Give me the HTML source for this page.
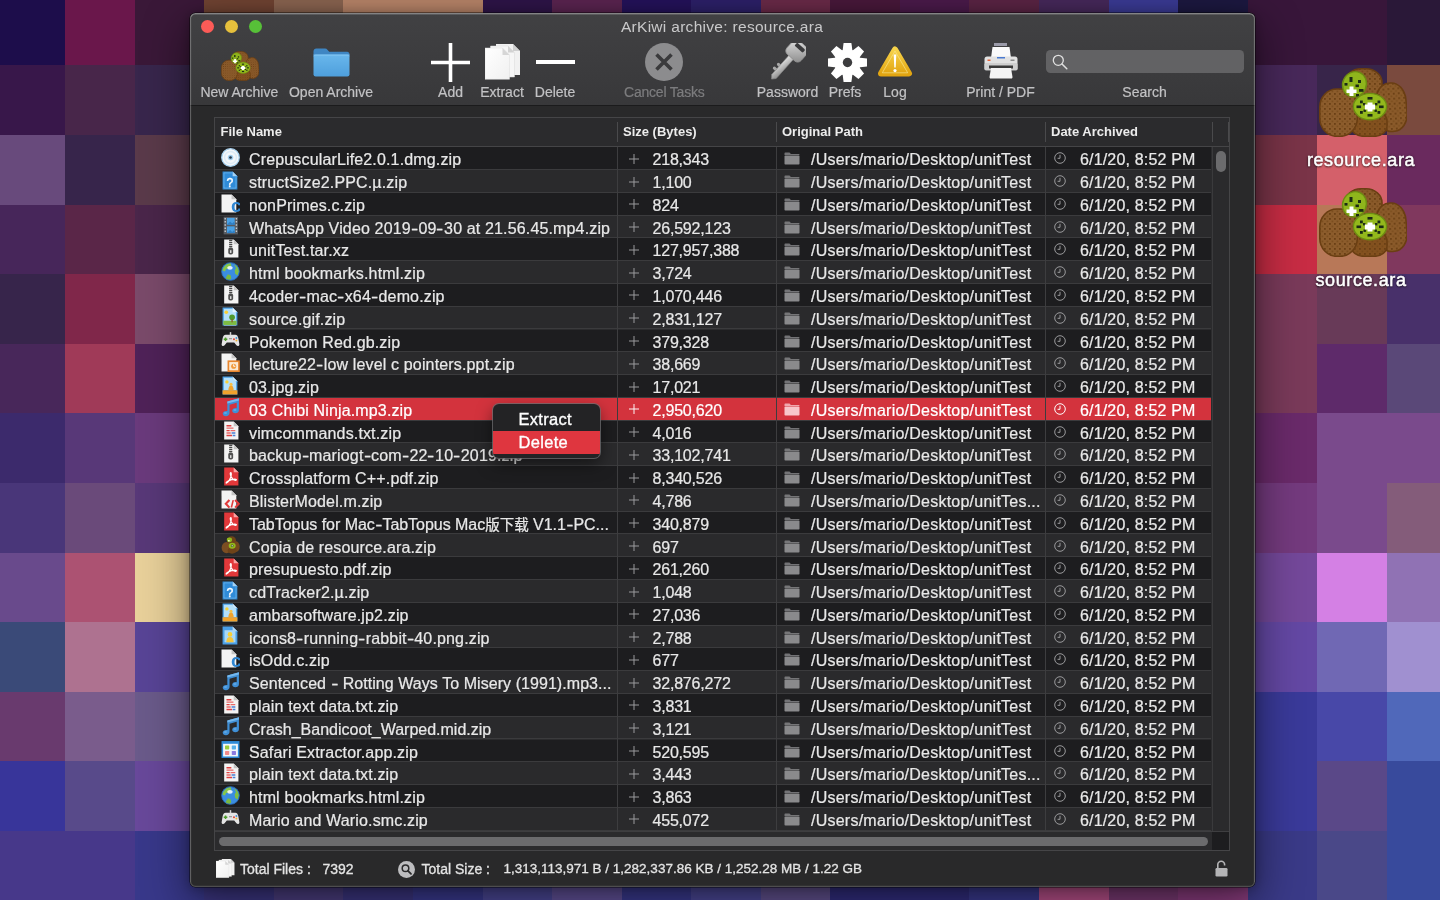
<!DOCTYPE html>
<html lang="en"><head><meta charset="utf-8"><title>ArKiwi archive: resource.ara</title>
<style>
*{box-sizing:border-box;margin:0;padding:0}
html,body{width:1440px;height:900px;overflow:hidden;background:#3a2a5a;font-family:"Liberation Sans","Noto Sans CJK SC",sans-serif;-webkit-font-smoothing:antialiased}
.bg{position:absolute;left:0;top:0}
.desk{will-change:transform;position:absolute;color:#fff;font-weight:400;-webkit-text-stroke:.5px #fff;font-size:18px;letter-spacing:.6px;text-shadow:0 1px 2px rgba(0,0,0,.7),0 0 3px rgba(0,0,0,.5);white-space:nowrap;transform:translateX(-50%)}
.win{will-change:transform;position:absolute;left:190px;top:13px;width:1065px;height:874px;border-radius:5.5px;background:#29292a;box-shadow:0 0 0 .5px rgba(0,0,0,.8),0 14px 44px 4px rgba(0,0,0,.45),0 1px 12px rgba(0,0,0,.3);overflow:hidden}
.win:after{content:"";position:absolute;inset:0;border-radius:5.5px;box-shadow:inset 0 1px 0 .5px rgba(255,255,255,.22),inset 0 0 0 1.2px rgba(255,255,255,.17);pointer-events:none}
.abs{position:absolute;left:-190px;top:-13px;width:1440px;height:900px}
.tb{position:absolute;left:190px;top:13px;width:1065px;height:93px;background:linear-gradient(#414143,#38383a);border-bottom:1.5px solid #1b1b1c}
.tl{position:absolute;top:19.5px;width:13px;height:13px;border-radius:50%}
.title{position:absolute;left:522px;width:400px;text-align:center;top:17.3px;font-size:15.5px;line-height:20px;color:#c9c9ca;letter-spacing:.3px;white-space:nowrap}
.lb{position:absolute;top:84px;font-size:14px;line-height:16px;color:#c2c2c4;white-space:nowrap;transform:translateX(-50%);letter-spacing:0;-webkit-text-stroke:.2px #c2c2c4}
.lb.dis{color:#7c7c7e;-webkit-text-stroke-color:#7c7c7e}
.ti{position:absolute;overflow:visible}
.search{position:absolute;left:1045.5px;top:49.5px;width:198px;height:23.5px;border-radius:4.5px;background:#626264}
.table{position:absolute;left:214px;top:117px;width:1016px;height:733.5px;border:1px solid #454547;background:#2b2b2d}
.hd{position:absolute;top:118px;height:28.5px;line-height:28.5px;font-size:13px;font-weight:700;color:#ececec;white-space:nowrap}
.hsep{position:absolute;top:122px;width:1px;height:20px;background:#4a4a4c}
.hline{position:absolute;left:215px;top:146.3px;width:1014px;height:1px;background:#454547}
.vsep{position:absolute;top:147.3px;width:1px;height:684px;background:#3d3d3f}
.row{position:absolute;left:215px;width:996px;height:22.8px;font-size:16px;line-height:22.8px;color:#e8e8e8;-webkit-text-stroke:.22px #e8e8e8;white-space:nowrap;border-bottom:1.2px solid #3b3b3d}
.row.odd{background:#1d1d1f}
.row.even{background:#2a2a2c}
.row.sel{background:#d3333d;color:#fff;-webkit-text-stroke-color:#fff}
.row span{position:absolute;top:2px}
.row svg{position:absolute;overflow:visible}
.fi{left:6px;top:.7px;width:19px;height:19px}
.nm{left:34px;letter-spacing:.15px}
.pl{left:414px;top:6.5px;width:10px;height:10px;color:#a0a0a2}
.sz{left:437.5px;letter-spacing:-.2px}
.fo{left:569px;top:5px;width:16px;height:13px;color:#8a8a8c}
.pa{left:596px;letter-spacing:.24px}
.ck{left:838.5px;top:5px;width:12px;height:12px;color:#9a9a9c}
.dt{left:865px;letter-spacing:.17px}
.hy{display:inline-block;font-style:normal;width:7.6px;text-align:center;transform:scaleX(1.35)}.cj{font-style:normal;font-size:14.5px}
.sel .pl,.sel .ck{color:#fff}.sel .fo{color:#f8c6ca}
.vsb{position:absolute;left:1212px;top:147.3px;width:17px;height:684px;background:#2a2a2c;border-left:1px solid #3a3a3c}
.vth{position:absolute;left:1216px;top:151px;width:10px;height:21px;border-radius:5px;background:#6b6b6d}
.hsb{position:absolute;left:215px;top:831.3px;width:1014px;height:18.5px;background:#2b2b2d;border-top:1px solid #3e3e40}
.hth{position:absolute;left:219px;top:837px;width:989px;height:9px;border-radius:4.5px;background:#6b6b6d}
.corner{position:absolute;left:1212px;top:832px;width:17px;height:17.5px;background:#1d1d1f}
.st{position:absolute;top:860px;font-size:14px;line-height:18px;color:#e4e4e4;white-space:nowrap;-webkit-text-stroke:.3px #e4e4e4}
.menu{position:absolute;left:493px;top:404px;width:107px;height:54px;border-radius:6px;background:#232325;box-shadow:0 0 0 1px rgba(110,110,112,.75),0 6px 16px rgba(0,0,0,.5);overflow:hidden;font-size:16.5px;color:#fff;-webkit-text-stroke:.35px #fff}
.mi{position:absolute;left:0;width:100%;height:22.5px;line-height:22.4px;padding-left:25.5px;letter-spacing:.3px}
.mi.hot{background:#df363f}
</style></head><body>
<svg class="bg" width="1440" height="900" viewBox="0 0 1440 900" shape-rendering="crispEdges"><rect x="0.0" y="0.0" width="65.6" height="65.8" fill="#1d0d4b"/><rect x="65.1" y="0.0" width="70.1" height="65.8" fill="#6a174b"/><rect x="134.7" y="0.0" width="70.1" height="65.8" fill="#3a1838"/><rect x="204.2" y="0.0" width="70.1" height="65.8" fill="#704332"/><rect x="273.8" y="0.0" width="70.1" height="65.8" fill="#8a6450"/><rect x="343.3" y="0.0" width="70.1" height="65.8" fill="#b88468"/><rect x="412.9" y="0.0" width="70.1" height="65.8" fill="#b88468"/><rect x="482.5" y="0.0" width="70.1" height="65.8" fill="#2e1448"/><rect x="552.0" y="0.0" width="70.1" height="65.8" fill="#5a2450"/><rect x="621.6" y="0.0" width="70.1" height="65.8" fill="#24125a"/><rect x="691.1" y="0.0" width="70.1" height="65.8" fill="#2c2068"/><rect x="760.7" y="0.0" width="70.1" height="65.8" fill="#6a2a48"/><rect x="830.3" y="0.0" width="70.1" height="65.8" fill="#48183a"/><rect x="899.8" y="0.0" width="70.1" height="65.8" fill="#4a1a4a"/><rect x="969.4" y="0.0" width="70.1" height="65.8" fill="#5a2444"/><rect x="1038.9" y="0.0" width="70.1" height="65.8" fill="#46285a"/><rect x="1108.5" y="0.0" width="70.1" height="65.8" fill="#3a3a94"/><rect x="1178.1" y="0.0" width="70.1" height="65.8" fill="#1c1840"/><rect x="1247.6" y="0.0" width="70.1" height="65.8" fill="#38163a"/><rect x="1317.2" y="0.0" width="70.1" height="65.8" fill="#38163a"/><rect x="1386.7" y="0.0" width="70.1" height="65.8" fill="#2a1838"/><rect x="0.0" y="65.3" width="65.6" height="70.1" fill="#38174a"/><rect x="65.1" y="65.3" width="70.1" height="70.1" fill="#48264a"/><rect x="134.7" y="65.3" width="70.1" height="70.1" fill="#38264c"/><rect x="1247.6" y="65.3" width="70.1" height="70.1" fill="#48285a"/><rect x="1317.2" y="65.3" width="70.1" height="70.1" fill="#38254a"/><rect x="1386.7" y="65.3" width="70.1" height="70.1" fill="#7a4a3e"/><rect x="0.0" y="134.9" width="65.6" height="70.1" fill="#684a7c"/><rect x="65.1" y="134.9" width="70.1" height="70.1" fill="#37254b"/><rect x="134.7" y="134.9" width="70.1" height="70.1" fill="#5a3a4a"/><rect x="1247.6" y="134.9" width="70.1" height="70.1" fill="#7a3448"/><rect x="1317.2" y="134.9" width="70.1" height="70.1" fill="#d4606a"/><rect x="1386.7" y="134.9" width="70.1" height="70.1" fill="#6a2a5e"/><rect x="0.0" y="204.5" width="65.6" height="70.1" fill="#47265a"/><rect x="65.1" y="204.5" width="70.1" height="70.1" fill="#5a2648"/><rect x="134.7" y="204.5" width="70.1" height="70.1" fill="#4a264a"/><rect x="1247.6" y="204.5" width="70.1" height="70.1" fill="#c82c44"/><rect x="1317.2" y="204.5" width="70.1" height="70.1" fill="#b87858"/><rect x="1386.7" y="204.5" width="70.1" height="70.1" fill="#80385e"/><rect x="0.0" y="274.1" width="65.6" height="70.1" fill="#37254b"/><rect x="65.1" y="274.1" width="70.1" height="70.1" fill="#80274a"/><rect x="134.7" y="274.1" width="70.1" height="70.1" fill="#7a4a6a"/><rect x="1247.6" y="274.1" width="70.1" height="70.1" fill="#7a3a5a"/><rect x="1317.2" y="274.1" width="70.1" height="70.1" fill="#683a58"/><rect x="1386.7" y="274.1" width="70.1" height="70.1" fill="#48306a"/><rect x="0.0" y="343.7" width="65.6" height="70.1" fill="#48275a"/><rect x="65.1" y="343.7" width="70.1" height="70.1" fill="#a03a58"/><rect x="134.7" y="343.7" width="70.1" height="70.1" fill="#4f2258"/><rect x="1247.6" y="343.7" width="70.1" height="70.1" fill="#7a3a5a"/><rect x="1317.2" y="343.7" width="70.1" height="70.1" fill="#5e2a6a"/><rect x="1386.7" y="343.7" width="70.1" height="70.1" fill="#5a4878"/><rect x="0.0" y="413.3" width="65.6" height="70.1" fill="#3c2a6c"/><rect x="65.1" y="413.3" width="70.1" height="70.1" fill="#583878"/><rect x="134.7" y="413.3" width="70.1" height="70.1" fill="#6a3a7c"/><rect x="1247.6" y="413.3" width="70.1" height="70.1" fill="#6a2a6a"/><rect x="1317.2" y="413.3" width="70.1" height="70.1" fill="#7a4a8c"/><rect x="1386.7" y="413.3" width="70.1" height="70.1" fill="#7a4a8c"/><rect x="0.0" y="482.9" width="65.6" height="70.1" fill="#493679"/><rect x="65.1" y="482.9" width="70.1" height="70.1" fill="#6a4a7a"/><rect x="134.7" y="482.9" width="70.1" height="70.1" fill="#583878"/><rect x="1247.6" y="482.9" width="70.1" height="70.1" fill="#743a7e"/><rect x="1317.2" y="482.9" width="70.1" height="70.1" fill="#7a4a8c"/><rect x="1386.7" y="482.9" width="70.1" height="70.1" fill="#845c7a"/><rect x="0.0" y="552.5" width="65.6" height="70.1" fill="#694a8c"/><rect x="65.1" y="552.5" width="70.1" height="70.1" fill="#ac5272"/><rect x="134.7" y="552.5" width="70.1" height="70.1" fill="#e8d09a"/><rect x="1247.6" y="552.5" width="70.1" height="70.1" fill="#74489a"/><rect x="1317.2" y="552.5" width="70.1" height="70.1" fill="#d480e4"/><rect x="1386.7" y="552.5" width="70.1" height="70.1" fill="#9072b4"/><rect x="0.0" y="622.1" width="65.6" height="70.1" fill="#3a4a78"/><rect x="65.1" y="622.1" width="70.1" height="70.1" fill="#ae7290"/><rect x="134.7" y="622.1" width="70.1" height="70.1" fill="#584496"/><rect x="1247.6" y="622.1" width="70.1" height="70.1" fill="#6448a4"/><rect x="1317.2" y="622.1" width="70.1" height="70.1" fill="#7068b4"/><rect x="1386.7" y="622.1" width="70.1" height="70.1" fill="#a090d0"/><rect x="0.0" y="691.7" width="65.6" height="70.1" fill="#693a6e"/><rect x="65.1" y="691.7" width="70.1" height="70.1" fill="#7a5c8c"/><rect x="134.7" y="691.7" width="70.1" height="70.1" fill="#6a5a8a"/><rect x="1247.6" y="691.7" width="70.1" height="70.1" fill="#3a3a9a"/><rect x="1317.2" y="691.7" width="70.1" height="70.1" fill="#4848a8"/><rect x="1386.7" y="691.7" width="70.1" height="70.1" fill="#5068ba"/><rect x="0.0" y="761.3" width="65.6" height="70.1" fill="#38359a"/><rect x="65.1" y="761.3" width="70.1" height="70.1" fill="#584a8a"/><rect x="134.7" y="761.3" width="70.1" height="70.1" fill="#68489a"/><rect x="1247.6" y="761.3" width="70.1" height="70.1" fill="#3a3a9a"/><rect x="1317.2" y="761.3" width="70.1" height="70.1" fill="#5a4888"/><rect x="1386.7" y="761.3" width="70.1" height="70.1" fill="#384a9c"/><rect x="0.0" y="830.9" width="65.6" height="70.1" fill="#47388a"/><rect x="65.1" y="830.9" width="70.1" height="70.1" fill="#47388a"/><rect x="134.7" y="830.9" width="70.1" height="70.1" fill="#38388a"/><rect x="204.2" y="830.9" width="70.1" height="70.1" fill="#3c3682"/><rect x="273.8" y="830.9" width="70.1" height="70.1" fill="#4c3e80"/><rect x="343.3" y="830.9" width="70.1" height="70.1" fill="#3c3682"/><rect x="412.9" y="830.9" width="70.1" height="70.1" fill="#3a3a90"/><rect x="482.5" y="830.9" width="70.1" height="70.1" fill="#4c4898"/><rect x="552.0" y="830.9" width="70.1" height="70.1" fill="#62529a"/><rect x="621.6" y="830.9" width="70.1" height="70.1" fill="#3a3a90"/><rect x="691.1" y="830.9" width="70.1" height="70.1" fill="#4c4898"/><rect x="760.7" y="830.9" width="70.1" height="70.1" fill="#625290"/><rect x="830.3" y="830.9" width="70.1" height="70.1" fill="#322e80"/><rect x="899.8" y="830.9" width="70.1" height="70.1" fill="#322e80"/><rect x="969.4" y="830.9" width="70.1" height="70.1" fill="#3a3a90"/><rect x="1038.9" y="830.9" width="70.1" height="70.1" fill="#b8508a"/><rect x="1108.5" y="830.9" width="70.1" height="70.1" fill="#7a3a74"/><rect x="1178.1" y="830.9" width="70.1" height="70.1" fill="#8a3c7e"/><rect x="1247.6" y="830.9" width="70.1" height="70.1" fill="#3a3a88"/><rect x="1317.2" y="830.9" width="70.1" height="70.1" fill="#4a4888"/><rect x="1386.7" y="830.9" width="70.1" height="70.1" fill="#384a9c"/></svg>
<svg width="0" height="0" style="position:absolute"><defs>
<pattern id="dots" width="5" height="5" patternUnits="userSpaceOnUse"><rect x="0" y="0" width="1.8" height="1.8" fill="#6a3f14"/><rect x="2.5" y="2.5" width="1.8" height="1.8" fill="#704416" opacity=".6"/></pattern>
<symbol id="i-bigkiwi" viewBox="0 0 88 69">
<rect x="26" y=".8" width="37" height="36" rx="16" ry="14" fill="#8a5a2a" stroke="#6a3e12" stroke-width="1.600"/>
<rect x="26" y=".8" width="37" height="36" rx="16" ry="14" fill="url(#dots)"/>
<rect x="57.500" y="15" width="30" height="48.500" rx="14" ry="18" transform="rotate(-5 72.500 39)" fill="#8a5a2a" stroke="#6a3e12" stroke-width="1.600"/>
<rect x="57.500" y="15" width="30" height="48.500" rx="14" ry="18" transform="rotate(-5 72.500 39)" fill="url(#dots)"/>
<rect x="32" y="43" width="36" height="25.300" rx="13" ry="10" fill="#83511f" stroke="#6a3e12" stroke-width="1.600"/>
<rect x="32" y="43" width="36" height="25.300" rx="13" ry="10" fill="url(#dots)"/>
<rect x=".8" y="21" width="37.500" height="47.300" rx="17" ry="18" fill="#8c5c2c" stroke="#6a3e12" stroke-width="1.600"/>
<rect x=".8" y="21" width="37.500" height="47.300" rx="17" ry="18" fill="url(#dots)"/>
<ellipse cx="35.500" cy="16.300" rx="11.800" ry="12.800" transform="rotate(25 35.500 16.300)" fill="#8fb51c" stroke="#6d8c12" stroke-width="1.400"/>
<g fill="#1c2a14"><rect x="30.500" y="9" width="3" height="5"/><rect x="39" y="12" width="3" height="3"/><rect x="25.500" y="15" width="3" height="2.600"/><rect x="36.500" y="16.500" width="3.400" height="2.600"/><rect x="40" y="21" width="4.500" height="2.800"/><rect x="37" y="26" width="3" height="2.500"/></g>
<path d="M30.500 18.500h4v3h3v3.600h-3v3h-4v-3h-3v-3.600h3z" fill="#fff"/>
<ellipse cx="51" cy="38.600" rx="16.600" ry="13.200" fill="#93b81c" stroke="#6d8c12" stroke-width="1.400"/>
<g fill="#1c2a14"><rect x="48.500" y="29" width="5" height="2.600"/><rect x="41" y="32.500" width="2.800" height="2.800"/><rect x="58.500" y="32.500" width="2.800" height="2.800"/><rect x="37.500" y="37.500" width="4.600" height="2.600"/><rect x="60" y="37.500" width="4.600" height="2.600"/><rect x="41" y="43" width="2.800" height="2.800"/><rect x="58.500" y="43" width="2.800" height="2.800"/><rect x="48.500" y="46" width="5" height="2.600"/><rect x="44" y="35" width="2.400" height="2.400"/><rect x="56" y="35" width="2.400" height="2.400"/><rect x="44.500" y="41.500" width="2.400" height="2.400"/><rect x="55.500" y="41.500" width="2.400" height="2.400"/></g>
<path d="M48.500 34.500h5v2h2.600v5h-2.600v2h-5v-2h-2.600v-5h2.600z" fill="#fff"/>
</symbol>
<symbol id="i-kiwi" viewBox="0 0 18 18"><ellipse cx="10" cy="5" rx="4.200" ry="3.800" fill="#6e4318"/><ellipse cx="14.300" cy="11" rx="3.400" ry="5" fill="#74481c"/><ellipse cx="5.200" cy="12" rx="4.600" ry="5.300" fill="#7c4e22"/><ellipse cx="10.500" cy="14.800" rx="4.200" ry="2.900" fill="#6e4318"/><ellipse cx="8" cy="4.600" rx="2.500" ry="2.300" fill="#8fb51c"/><ellipse cx="10.600" cy="10.200" rx="3.300" ry="2.800" fill="#93b81c"/><circle cx="10.600" cy="10.200" r="1.200" fill="#2a3a10"/><rect x="10" y="9.700" width="1.200" height="1.100" fill="#fff"/><rect x="6.800" y="4.800" width="1.300" height="1.300" fill="#fff"/></symbol>
<symbol id="i-plus" viewBox="0 0 11 11"><path d="M5.5 0v11M0 5.5h11" stroke="currentColor" stroke-width="1.050" fill="none"/></symbol>
<symbol id="i-folder" viewBox="0 0 16 13"><path d="M.5 1.2C.5.8.8.5 1.2.5h4.3l1.4 1.6h7.9c.4 0 .7.3.7.7V3H.5z" fill="currentColor" opacity=".8"/><rect x=".5" y="3.6" width="15" height="9" rx=".8" fill="currentColor"/></symbol>
<symbol id="i-clock" viewBox="0 0 12 12"><circle cx="6" cy="6" r="5.3" fill="none" stroke="currentColor" stroke-width="1"/><path d="M6 2.8V6.3H3.6" fill="none" stroke="currentColor" stroke-width="1"/></symbol>

<symbol id="i-disc" viewBox="0 0 18 18"><circle cx="9" cy="9" r="8.300" fill="#f3f7fb" stroke="#a9d3f1" stroke-width="1.200"/><circle cx="9" cy="9" r="5.600" fill="none" stroke="#dcebf7" stroke-width="1.400"/><circle cx="9" cy="9" r="2.600" fill="#a4cfee"/><circle cx="9" cy="9" r="1.300" fill="#27384a"/></symbol>
<symbol id="i-unk" viewBox="0 0 18 18"><path d="M1.5 .5H11L15.5 5v12.5h-14z" fill="#2f8bd8"/><path d="M11 .5V5h4.5z" fill="#a6d2f3"/><path d="M2.800 1.800h7.700M2.800 1.800v14.400h11.400V6" fill="none" stroke="#7fc0f0" stroke-width=".7" opacity=".8"/><text x="8.500" y="14.800" font-size="11.500" font-weight="400" fill="#fff" stroke="#fff" stroke-width=".35" text-anchor="middle" font-family="Liberation Sans,sans-serif">?</text></symbol>
<symbol id="i-cfile" viewBox="0 0 18 18"><path d="M.5 .5H10L14.5 5v12.5H.5z" fill="#f3f3f3"/><path d="M10 .5V5h4.5z" fill="#c4c4c4"/><text x="14.500" y="17.500" font-size="18" font-weight="700" fill="#2f86d2" text-anchor="middle" font-family="Liberation Sans,sans-serif">c</text></symbol>
<symbol id="i-video" viewBox="0 0 18 18"><rect x="2.5" y=".8" width="13.5" height="16.6" fill="#585c62"/><rect x="5.6" y="1.8" width="7.4" height="6.4" fill="#4aa1e4"/><rect x="5.6" y="9.8" width="7.4" height="6.4" fill="#4aa1e4"/><path d="M5.6 8.2l3-3 2 2 1.4-1.4 1 1v1.4zM5.6 16.2l3-3 2 2 1.4-1.4 1 1v1.4z" fill="#2f7fc4"/><path d="M4 1.8v15M14.6 1.8v15" stroke="#c8ccd0" stroke-width="1.3" stroke-dasharray="1.4 1.6"/></symbol>
<symbol id="i-zip" viewBox="0 0 18 18"><g transform="translate(1 0)"><path d="M2 .5h9L15.5 5v12.5H2z" fill="#f3f3f3"/><path d="M11 .5V5h4.5z" fill="#c4c4c4"/><path d="M8.200 .8v8" stroke="#484848" stroke-width="3" stroke-dasharray="1.100 .8"/><rect x="5.900" y="8" width="4.600" height="6.800" rx="1.900" fill="#505050"/><rect x="7.5" y="10.6" width="1.4" height="2.6" fill="#ddd"/></g></symbol>
<symbol id="i-globe" viewBox="0 0 18 18"><circle cx="9" cy="9" r="8.4" fill="#3b8de0"/><path d="M3 4.5c2-2.6 4.4-3.6 6-3.6l.8 2.6-2.6 2.8-2.4.4-1 2.4L1.2 8c.2-1.4.9-2.6 1.800-3.500z" fill="#86c64a"/><path d="M12.5 2.200c2.500 1.200 4.300 3.400 4.700 6.200l-1.400 4.400-2.400-1.600-.4-3.400 1.200-2.200z" fill="#7fbe44"/><path d="M6.500 11.500l2.600 1 .6 2.800-1.600 2c-1.600-.1-3-.8-4-1.700z" fill="#79b840"/><ellipse cx="8.500" cy="5.500" rx="2.600" ry="1.800" fill="#fff" opacity=".85"/><circle cx="9" cy="9" r="8.400" fill="none" stroke="#2a6fc0" stroke-width=".8"/></symbol>
<symbol id="i-gif" viewBox="0 0 18 18"><path d="M1.500 .500H11L15.500 5v12.500h-14z" fill="#4a9fe6"/><path d="M2.700 1.700H10.500L14.300 5.500v12h-11.600z" fill="#b4e0fa"/><path d="M11 .500V5h4.500z" fill="#e3f3fd"/><rect x="2.200" y="13" width="12.600" height="4" fill="#7dbb42"/><circle cx="5" cy="5" r="1.700" fill="#f7d038"/><circle cx="10.500" cy="9.800" r="2.700" fill="#4f9a2e"/><rect x="9.900" y="11.500" width="1.200" height="3" fill="#8a5a2a"/></symbol>
<symbol id="i-jpg" viewBox="0 0 18 18"><path d="M1.500 .500H11L15.500 5v12.500h-14z" fill="#4a9fe6"/><path d="M11 .500V5h4.500z" fill="#d6ecfb"/><path d="M2.700 1.700H10.500L14.300 5.500v8h-11.600z" fill="#b4e0fa"/><rect x="1.500" y="13.500" width="14" height="4" fill="#f1a32c"/><circle cx="5.600" cy="5.600" r="1.600" fill="#f7d038"/><path d="M7 13.500c0-3 1-4.500 2.500-4.500s2.500 1.500 2.500 4.500z" fill="#f1a32c"/><circle cx="9.500" cy="8" r="1.500" fill="#f6c04a"/></symbol>
<symbol id="i-png" viewBox="0 0 18 18"><path d="M1.500 .500H11L15.500 5v12.500h-14z" fill="#4a9fe6"/><path d="M11 .500V5h4.500z" fill="#b9dcf6"/><rect x="3.300" y="4" width="10.400" height="11.500" fill="#a9d8f7"/><circle cx="8.500" cy="8" r="2.200" fill="#f7d038"/><path d="M5 15.500c0-3.400 1.400-5 3.500-5s3.500 1.600 3.500 5z" fill="#f4c53c"/></symbol>
<symbol id="i-pad" viewBox="0 0 18 18"><path d="M4.500 4.500h9c1.700 0 2.600 1.300 3 3.500l.9 5.500c.2 1.700-1.700 2.300-2.800 1l-2.100-2.600h-7L3.400 14.500c-1.100 1.300-3 .7-2.800-1L1.500 8c.4-2.200 1.300-3.500 3-3.500z" fill="#e4e4e4"/><rect x="8.300" y="2" width="1.400" height="3" fill="#d0d0d0"/><path d="M4.300 7v3.400M2.600 8.700H6" stroke="#4c9a2a" stroke-width="1.400"/><circle cx="12.300" cy="8.700" r="1" fill="#e2483a"/><circle cx="14.600" cy="7.600" r=".9" fill="#3f8fd6"/><circle cx="14.600" cy="9.900" r=".9" fill="#f0b030"/><rect x="7.600" y="7.600" width="2.800" height="1.200" fill="#9a9a9a"/></symbol>
<symbol id="i-ppt" viewBox="0 0 18 18"><path d="M.500 .500H10L14.500 5v12.500H.500z" fill="#f3f3f3"/><path d="M10 .500V5h4.500z" fill="#c4c4c4"/><rect x="7" y="7.800" width="10" height="9.400" fill="#fbe9d2" stroke="#e8862e" stroke-width="1.600"/><circle cx="12" cy="12.500" r="2.400" fill="#f19a3c"/><path d="M12 10.800v1.800h1.600" stroke="#fff" stroke-width=".9" fill="none"/></symbol>
<symbol id="i-music" viewBox="0 0 18 18"><path d="M6 3.200L17 .300v11.200c0 1.700-1.600 2.900-3.400 2.900s-3-1-3-2.400 1.400-2.600 3.200-2.600c.4 0 .8.100 1.100.200V4.600L8.100 6.400v7.900c0 1.700-1.600 3-3.400 3s-3.100-1-3.100-2.500 1.500-2.600 3.300-2.600c.4 0 .8.100 1.100.200z" fill="#3f8fd6"/><path d="M6 3.200L17 .300v2L6 5.200z" fill="#74b8ee"/><ellipse cx="4.200" cy="14.200" rx="1.500" ry="1" fill="#74b8ee" opacity=".6"/><ellipse cx="13.200" cy="11.400" rx="1.500" ry="1" fill="#74b8ee" opacity=".6"/></symbol>
<symbol id="i-txt" viewBox="0 0 18 18"><g transform="translate(1 0)"><path d="M2 .500h9L15.500 5v12.500H2z" fill="#f3f3f3"/><path d="M11 .500V5h4.500z" fill="#c4c4c4"/><g stroke-width="1.300"><path d="M4.200 4.500h4.600M4.200 9.100h3M4.200 13.700h5.200" stroke="#df3f3f"/><path d="M4.200 6.800h6.600M8 9.100h4.500M4.200 11.400h4" stroke="#e86a6a"/><path d="M9 11.400h3.600M10 13.700h2.600" stroke="#4a7fd4"/></g></g></symbol>
<symbol id="i-pdf" viewBox="0 0 18 18"><g transform="translate(1 0)"><path d="M2 .500h9L15.500 5v12.500H2z" fill="#e2383a"/><path d="M11 .500V5h4.500z" fill="#f6a6a6"/><path d="M4.200 15.200c1.800-1 3.400-3.600 4.200-6.200.5-1.700.6-3.600-.1-3.700-.8-.1-.7 1.900.2 3.700.9 1.900 2.600 3.500 4.200 3.600 1.100.1 1.400-.7.300-1-1.800-.5-6.200.8-8.300 2.400-.9.700-1.100 1.500-.5 1.200z" fill="none" stroke="#fff" stroke-width="1.100"/></g></symbol>
<symbol id="i-code" viewBox="0 0 18 18"><path d="M.500 .500H10L14.500 5v12.500H.500z" fill="#f3f3f3"/><path d="M10 .500V5h4.500z" fill="#c4c4c4"/><path d="M8 9.500l-3.400 3.600L8 16.700M13.400 9.500l3.400 3.600-3.400 3.600" fill="none" stroke="#e03a3a" stroke-width="2"/><path d="M11.600 9.600l-1.800 7" stroke="#e03a3a" stroke-width="1.500"/></symbol>
<symbol id="i-app" viewBox="0 0 18 18"><rect x=".500" y="1" width="17" height="16" fill="#2f8bd8"/><rect x="2" y="3.600" width="14" height="12" fill="#f2f6fa"/><rect x="3.800" y="5.200" width="4" height="3.800" rx=".6" fill="#9ccc3c"/><rect x="10.200" y="5.200" width="4" height="3.800" rx=".6" fill="#58b0ea"/><rect x="3.800" y="10.400" width="4" height="3.800" rx=".6" fill="#f08a8a"/><rect x="10.200" y="10.400" width="4" height="3.800" rx=".6" fill="#8a7be0"/></symbol>

<linearGradient id="gfold" x1="0" y1="0" x2="0" y2="1"><stop offset="0" stop-color="#69b7ec"/><stop offset="1" stop-color="#4e9fdc"/></linearGradient>
<symbol id="t-folder" viewBox="0 0 37 29"><path d="M.500 3.500C.500 1.800 1.700 .600 3.300 .600h8.800c1 0 1.700.4 2.300 1.100l1.800 2H34c1.500 0 2.500 1 2.500 2.500V9H.500z" fill="#3f86c3"/><rect x=".500" y="6.500" width="36" height="22" rx="2.200" fill="url(#gfold)"/><rect x=".500" y="6.500" width="36" height="1.200" fill="#8ccaf4" opacity=".7"/></symbol>
<linearGradient id="gdoc" x1="0" y1="0" x2="1" y2="1"><stop offset="0" stop-color="#ffffff"/><stop offset="1" stop-color="#f0f0f0"/></linearGradient>
<symbol id="t-docs" viewBox="0 0 36 36"><path d="M11 0h17l7 7v24H11z" fill="#f1f1f1"/><path d="M28 0v7h7z" fill="#cfcfcf"/><path d="M5.500 2h17.500l6.500 6.500v24.500H5.500z" fill="#f6f6f6" stroke="#d8d8d8" stroke-width=".5"/><path d="M23 2v6.500h6.500z" fill="#d2d2d2"/><path d="M0 4h17.500l7 7v24.300H0z" fill="url(#gdoc)" stroke="#dcdcdc" stroke-width=".5"/><path d="M17.500 4v7h7z" fill="#d6d6d6"/></symbol>
<linearGradient id="gkey" x1="0" y1="0" x2="1" y2="1"><stop offset="0" stop-color="#e4e4e4"/><stop offset=".5" stop-color="#b6b6b6"/><stop offset="1" stop-color="#8a8a8a"/></linearGradient>
<symbol id="t-key" viewBox="0 0 38 38"><g transform="rotate(42 19 19)"><rect x="9.500" y="-5" width="19" height="18" rx="4.500" fill="url(#gkey)" stroke="#9a9a9a" stroke-width=".8"/><rect x="13.500" y="-2.200" width="11" height="4" rx="1.200" fill="#3a3a3c"/><path d="M16 13h6v25.500l-3 3.500-3-3.500z" fill="url(#gkey)" stroke="#8a8a8a" stroke-width=".6"/><path d="M16 25h-2.500l-1 1.500 1 1.500h2.500zM16 30.500h-3l-1 1.500 1 1.500h3z" fill="#a8a8a8"/></g></symbol>
<symbol id="t-gear" viewBox="0 0 39 39"><g fill="#fff"><circle cx="19.500" cy="19.500" r="13.200"/><g id="tooth"><path d="M15.600 0h7.800l1.200 9h-10.200z"/></g><use href="#tooth" transform="rotate(45 19.500 19.500)"/><use href="#tooth" transform="rotate(90 19.500 19.500)"/><use href="#tooth" transform="rotate(135 19.500 19.500)"/><use href="#tooth" transform="rotate(180 19.500 19.500)"/><use href="#tooth" transform="rotate(225 19.500 19.500)"/><use href="#tooth" transform="rotate(270 19.500 19.500)"/><use href="#tooth" transform="rotate(315 19.500 19.500)"/></g><circle cx="19.500" cy="19.500" r="4.700" fill="#3c3c3e"/></symbol>
<linearGradient id="gwarn" x1="0" y1="0" x2="0" y2="1"><stop offset="0" stop-color="#f7d34a"/><stop offset="1" stop-color="#e2a511"/></linearGradient>
<symbol id="t-warn" viewBox="0 0 36 33"><path d="M18 4.500L32 28.500H4z" fill="url(#gwarn)" stroke="url(#gwarn)" stroke-width="6" stroke-linejoin="round"/><path d="M18 6L30.700 27.800H5.300z" fill="none" stroke="#f8e48e" stroke-width=".9" stroke-linejoin="round" opacity=".75"/><path d="M16.700 9.500h2.600l-.6 13h-1.400z" fill="#fff"/><circle cx="18" cy="25.600" r="1.600" fill="#fff"/></symbol>
<symbol id="t-print" viewBox="0 0 34 36"><rect x="10" y="0" width="13" height="3" fill="#9a9aa8"/><path d="M8.500 4h17l1.500 11h-20z" fill="#fafafa"/><path d="M3 13.500h28c1.500 0 2.500 1 2.500 2.500v9.500c0 1-.8 1.800-1.800 1.800H2.300c-1 0-1.800-.8-1.800-1.800V16c0-1.500 1-2.500 2.500-2.500z" fill="#e2e2e2"/><rect x=".500" y="20" width="33" height="7.300" rx="1.500" fill="#cfcfcf"/><rect x="5" y="22.500" width="24" height="3" fill="#3a3a3a"/><path d="M7 25h20l1.500 9c.1.800-.4 1.500-1.200 1.500H6.700c-.8 0-1.300-.7-1.200-1.500z" fill="#f4f4f4"/><rect x="3.500" y="16.500" width="3" height="1.500" fill="#e8643a"/><rect x="26.500" y="16.500" width="4" height="1.500" fill="#8a8a8a"/><rect x="13" y="14" width="8" height="1.500" fill="#4a7ad0"/></symbol>

</defs></svg>
<svg class="ti" style="left:1319px;top:68px;width:88px;height:69px" viewBox="0 0 88 69"><use href="#i-bigkiwi"/></svg>
<div class="desk" style="left:1361px;top:150px">resource.ara</div>
<svg class="ti" style="left:1319px;top:188px;width:88px;height:69px" viewBox="0 0 88 69"><use href="#i-bigkiwi"/></svg>
<div class="desk" style="left:1361px;top:270px">source.ara</div>
<div class="win"><div class="abs">
<div class="tb"></div>
<div class="tl" style="left:200.5px;background:#fc5b57"></div>
<div class="tl" style="left:224.5px;background:#e5bf3c"></div>
<div class="tl" style="left:248.5px;background:#57c038"></div>
<div class="title">ArKiwi archive: resource.ara</div>

<svg class="ti" style="left:221px;top:51px;width:38px;height:30px" viewBox="0 0 88 69"><use href="#i-bigkiwi"/></svg>
<div class="lb" style="left:239.3px">New Archive</div>
<svg class="ti" style="left:313px;top:47.5px;width:37px;height:29px" viewBox="0 0 37 29"><use href="#t-folder"/></svg>
<div class="lb" style="left:331px">Open Archive</div>
<svg class="ti" style="left:431px;top:42.5px;width:39px;height:39px" viewBox="0 0 39 39"><path d="M19.5 0v39M0 19.5h39" stroke="#fff" stroke-width="3.6" fill="none"/></svg>
<div class="lb" style="left:450.5px">Add</div>
<svg class="ti" style="left:485px;top:44px;width:36px;height:36px" viewBox="0 0 36 36"><use href="#t-docs"/></svg>
<div class="lb" style="left:502px">Extract</div>
<svg class="ti" style="left:535.5px;top:42.5px;width:39px;height:39px" viewBox="0 0 39 39"><path d="M0 19h39" stroke="#fff" stroke-width="4" fill="none"/></svg>
<div class="lb" style="left:555px">Delete</div>
<svg class="ti" style="left:645px;top:43px;width:38px;height:38px" viewBox="0 0 38 38"><circle cx="19" cy="19" r="19" fill="#8c8c8e"/><path d="M11.5 11.5l15 15M26.5 11.5l-15 15" stroke="#3a3a3c" stroke-width="3.6" fill="none"/></svg>
<div class="lb dis" style="left:664.3px;letter-spacing:-.2px">Cancel Tasks</div>
<svg class="ti" style="left:768px;top:43px;width:38px;height:38px" viewBox="0 0 38 38"><use href="#t-key"/></svg>
<div class="lb" style="left:787.5px">Password</div>
<svg class="ti" style="left:828px;top:42.5px;width:39px;height:39px" viewBox="0 0 39 39"><use href="#t-gear"/></svg>
<div class="lb" style="left:845px">Prefs</div>
<svg class="ti" style="left:877px;top:45px;width:36px;height:33px" viewBox="0 0 36 33"><use href="#t-warn"/></svg>
<div class="lb" style="left:895px">Log</div>
<svg class="ti" style="left:984px;top:43px;width:34px;height:36px" viewBox="0 0 34 36"><use href="#t-print"/></svg>
<div class="lb" style="left:1000.5px">Print / PDF</div>
<div class="search"></div>
<svg class="ti" style="left:1052px;top:54px;width:16px;height:16px" viewBox="0 0 16 16"><circle cx="6.3" cy="6.3" r="5" fill="none" stroke="#e0e0e0" stroke-width="1.3"/><path d="M10 10l4.8 4.8" stroke="#e0e0e0" stroke-width="1.5" stroke-linecap="round"/></svg>
<div class="lb" style="left:1144.5px">Search</div>

<div class="table"></div>
<div class="hd" style="left:220.5px">File Name</div>
<div class="hd" style="left:623px">Size (Bytes)</div>
<div class="hd" style="left:782px">Original Path</div>
<div class="hd" style="left:1051px">Date Archived</div>
<div class="hsep" style="left:617px"></div><div class="hsep" style="left:776px"></div><div class="hsep" style="left:1045px"></div><div class="hsep" style="left:1211.5px"></div><div class="hsep" style="left:1228px"></div>
<div class="hline"></div>
<div class="row odd" style="top:147.3px"><svg class="fi"><use href="#i-disc"/></svg><span class="nm">CrepuscularLife2.0.1.dmg.zip</span><svg class="pl"><use href="#i-plus"/></svg><span class="sz">218,343</span><svg class="fo"><use href="#i-folder"/></svg><span class="pa">/Users/mario/Desktop/unitTest</span><svg class="ck"><use href="#i-clock"/></svg><span class="dt">6/1/20, 8:52 PM</span></div>
<div class="row even" style="top:170.1px"><svg class="fi"><use href="#i-unk"/></svg><span class="nm">structSize2.PPC.µ.zip</span><svg class="pl"><use href="#i-plus"/></svg><span class="sz">1,100</span><svg class="fo"><use href="#i-folder"/></svg><span class="pa">/Users/mario/Desktop/unitTest</span><svg class="ck"><use href="#i-clock"/></svg><span class="dt">6/1/20, 8:52 PM</span></div>
<div class="row odd" style="top:192.9px"><svg class="fi"><use href="#i-cfile"/></svg><span class="nm">nonPrimes.c.zip</span><svg class="pl"><use href="#i-plus"/></svg><span class="sz">824</span><svg class="fo"><use href="#i-folder"/></svg><span class="pa">/Users/mario/Desktop/unitTest</span><svg class="ck"><use href="#i-clock"/></svg><span class="dt">6/1/20, 8:52 PM</span></div>
<div class="row even" style="top:215.6px"><svg class="fi"><use href="#i-video"/></svg><span class="nm">WhatsApp Video 2019<i class="hy">-</i>09<i class="hy">-</i>30 at 21.56.45.mp4.zip</span><svg class="pl"><use href="#i-plus"/></svg><span class="sz">26,592,123</span><svg class="fo"><use href="#i-folder"/></svg><span class="pa">/Users/mario/Desktop/unitTest</span><svg class="ck"><use href="#i-clock"/></svg><span class="dt">6/1/20, 8:52 PM</span></div>
<div class="row odd" style="top:238.4px"><svg class="fi"><use href="#i-zip"/></svg><span class="nm">unitTest.tar.xz</span><svg class="pl"><use href="#i-plus"/></svg><span class="sz">127,957,388</span><svg class="fo"><use href="#i-folder"/></svg><span class="pa">/Users/mario/Desktop/unitTest</span><svg class="ck"><use href="#i-clock"/></svg><span class="dt">6/1/20, 8:52 PM</span></div>
<div class="row even" style="top:261.2px"><svg class="fi"><use href="#i-globe"/></svg><span class="nm">html bookmarks.html.zip</span><svg class="pl"><use href="#i-plus"/></svg><span class="sz">3,724</span><svg class="fo"><use href="#i-folder"/></svg><span class="pa">/Users/mario/Desktop/unitTest</span><svg class="ck"><use href="#i-clock"/></svg><span class="dt">6/1/20, 8:52 PM</span></div>
<div class="row odd" style="top:283.9px"><svg class="fi"><use href="#i-zip"/></svg><span class="nm">4coder<i class="hy">-</i>mac<i class="hy">-</i>x64<i class="hy">-</i>demo.zip</span><svg class="pl"><use href="#i-plus"/></svg><span class="sz">1,070,446</span><svg class="fo"><use href="#i-folder"/></svg><span class="pa">/Users/mario/Desktop/unitTest</span><svg class="ck"><use href="#i-clock"/></svg><span class="dt">6/1/20, 8:52 PM</span></div>
<div class="row even" style="top:306.7px"><svg class="fi"><use href="#i-gif"/></svg><span class="nm">source.gif.zip</span><svg class="pl"><use href="#i-plus"/></svg><span class="sz">2,831,127</span><svg class="fo"><use href="#i-folder"/></svg><span class="pa">/Users/mario/Desktop/unitTest</span><svg class="ck"><use href="#i-clock"/></svg><span class="dt">6/1/20, 8:52 PM</span></div>
<div class="row odd" style="top:329.5px"><svg class="fi"><use href="#i-pad"/></svg><span class="nm">Pokemon Red.gb.zip</span><svg class="pl"><use href="#i-plus"/></svg><span class="sz">379,328</span><svg class="fo"><use href="#i-folder"/></svg><span class="pa">/Users/mario/Desktop/unitTest</span><svg class="ck"><use href="#i-clock"/></svg><span class="dt">6/1/20, 8:52 PM</span></div>
<div class="row even" style="top:352.3px"><svg class="fi"><use href="#i-ppt"/></svg><span class="nm">lecture22<i class="hy">-</i>low level c pointers.ppt.zip</span><svg class="pl"><use href="#i-plus"/></svg><span class="sz">38,669</span><svg class="fo"><use href="#i-folder"/></svg><span class="pa">/Users/mario/Desktop/unitTest</span><svg class="ck"><use href="#i-clock"/></svg><span class="dt">6/1/20, 8:52 PM</span></div>
<div class="row odd" style="top:375.1px"><svg class="fi"><use href="#i-jpg"/></svg><span class="nm">03.jpg.zip</span><svg class="pl"><use href="#i-plus"/></svg><span class="sz">17,021</span><svg class="fo"><use href="#i-folder"/></svg><span class="pa">/Users/mario/Desktop/unitTest</span><svg class="ck"><use href="#i-clock"/></svg><span class="dt">6/1/20, 8:52 PM</span></div>
<div class="row even sel" style="top:397.8px"><svg class="fi"><use href="#i-music"/></svg><span class="nm">03 Chibi Ninja.mp3.zip</span><svg class="pl"><use href="#i-plus"/></svg><span class="sz">2,950,620</span><svg class="fo"><use href="#i-folder"/></svg><span class="pa">/Users/mario/Desktop/unitTest</span><svg class="ck"><use href="#i-clock"/></svg><span class="dt">6/1/20, 8:52 PM</span></div>
<div class="row odd" style="top:420.6px"><svg class="fi"><use href="#i-txt"/></svg><span class="nm">vimcommands.txt.zip</span><svg class="pl"><use href="#i-plus"/></svg><span class="sz">4,016</span><svg class="fo"><use href="#i-folder"/></svg><span class="pa">/Users/mario/Desktop/unitTest</span><svg class="ck"><use href="#i-clock"/></svg><span class="dt">6/1/20, 8:52 PM</span></div>
<div class="row even" style="top:443.4px"><svg class="fi"><use href="#i-zip"/></svg><span class="nm">backup<i class="hy">-</i>mariogt<i class="hy">-</i>com<i class="hy">-</i>22<i class="hy">-</i>10<i class="hy">-</i>2019.zip</span><svg class="pl"><use href="#i-plus"/></svg><span class="sz">33,102,741</span><svg class="fo"><use href="#i-folder"/></svg><span class="pa">/Users/mario/Desktop/unitTest</span><svg class="ck"><use href="#i-clock"/></svg><span class="dt">6/1/20, 8:52 PM</span></div>
<div class="row odd" style="top:466.1px"><svg class="fi"><use href="#i-pdf"/></svg><span class="nm">Crossplatform C++.pdf.zip</span><svg class="pl"><use href="#i-plus"/></svg><span class="sz">8,340,526</span><svg class="fo"><use href="#i-folder"/></svg><span class="pa">/Users/mario/Desktop/unitTest</span><svg class="ck"><use href="#i-clock"/></svg><span class="dt">6/1/20, 8:52 PM</span></div>
<div class="row even" style="top:488.9px"><svg class="fi"><use href="#i-code"/></svg><span class="nm">BlisterModel.m.zip</span><svg class="pl"><use href="#i-plus"/></svg><span class="sz">4,786</span><svg class="fo"><use href="#i-folder"/></svg><span class="pa">/Users/mario/Desktop/unitTes...</span><svg class="ck"><use href="#i-clock"/></svg><span class="dt">6/1/20, 8:52 PM</span></div>
<div class="row odd" style="top:511.7px"><svg class="fi"><use href="#i-pdf"/></svg><span class="nm" style="letter-spacing:-0.03px">TabTopus for Mac<i class="hy">-</i>TabTopus Mac<i class="cj">版下载</i> V1.1<i class="hy">-</i>PC...</span><svg class="pl"><use href="#i-plus"/></svg><span class="sz">340,879</span><svg class="fo"><use href="#i-folder"/></svg><span class="pa">/Users/mario/Desktop/unitTest</span><svg class="ck"><use href="#i-clock"/></svg><span class="dt">6/1/20, 8:52 PM</span></div>
<div class="row even" style="top:534.5px"><svg class="fi"><use href="#i-kiwi"/></svg><span class="nm">Copia de resource.ara.zip</span><svg class="pl"><use href="#i-plus"/></svg><span class="sz">697</span><svg class="fo"><use href="#i-folder"/></svg><span class="pa">/Users/mario/Desktop/unitTest</span><svg class="ck"><use href="#i-clock"/></svg><span class="dt">6/1/20, 8:52 PM</span></div>
<div class="row odd" style="top:557.2px"><svg class="fi"><use href="#i-pdf"/></svg><span class="nm">presupuesto.pdf.zip</span><svg class="pl"><use href="#i-plus"/></svg><span class="sz">261,260</span><svg class="fo"><use href="#i-folder"/></svg><span class="pa">/Users/mario/Desktop/unitTest</span><svg class="ck"><use href="#i-clock"/></svg><span class="dt">6/1/20, 8:52 PM</span></div>
<div class="row even" style="top:580.0px"><svg class="fi"><use href="#i-unk"/></svg><span class="nm">cdTracker2.µ.zip</span><svg class="pl"><use href="#i-plus"/></svg><span class="sz">1,048</span><svg class="fo"><use href="#i-folder"/></svg><span class="pa">/Users/mario/Desktop/unitTest</span><svg class="ck"><use href="#i-clock"/></svg><span class="dt">6/1/20, 8:52 PM</span></div>
<div class="row odd" style="top:602.8px"><svg class="fi"><use href="#i-jpg"/></svg><span class="nm">ambarsoftware.jp2.zip</span><svg class="pl"><use href="#i-plus"/></svg><span class="sz">27,036</span><svg class="fo"><use href="#i-folder"/></svg><span class="pa">/Users/mario/Desktop/unitTest</span><svg class="ck"><use href="#i-clock"/></svg><span class="dt">6/1/20, 8:52 PM</span></div>
<div class="row even" style="top:625.6px"><svg class="fi"><use href="#i-png"/></svg><span class="nm">icons8<i class="hy">-</i>running<i class="hy">-</i>rabbit<i class="hy">-</i>40.png.zip</span><svg class="pl"><use href="#i-plus"/></svg><span class="sz">2,788</span><svg class="fo"><use href="#i-folder"/></svg><span class="pa">/Users/mario/Desktop/unitTest</span><svg class="ck"><use href="#i-clock"/></svg><span class="dt">6/1/20, 8:52 PM</span></div>
<div class="row odd" style="top:648.3px"><svg class="fi"><use href="#i-cfile"/></svg><span class="nm">isOdd.c.zip</span><svg class="pl"><use href="#i-plus"/></svg><span class="sz">677</span><svg class="fo"><use href="#i-folder"/></svg><span class="pa">/Users/mario/Desktop/unitTest</span><svg class="ck"><use href="#i-clock"/></svg><span class="dt">6/1/20, 8:52 PM</span></div>
<div class="row even" style="top:671.1px"><svg class="fi"><use href="#i-music"/></svg><span class="nm" style="letter-spacing:0.06px">Sentenced <i class="hy">-</i> Rotting Ways To Misery (1991).mp3...</span><svg class="pl"><use href="#i-plus"/></svg><span class="sz">32,876,272</span><svg class="fo"><use href="#i-folder"/></svg><span class="pa">/Users/mario/Desktop/unitTest</span><svg class="ck"><use href="#i-clock"/></svg><span class="dt">6/1/20, 8:52 PM</span></div>
<div class="row odd" style="top:693.9px"><svg class="fi"><use href="#i-txt"/></svg><span class="nm">plain text data.txt.zip</span><svg class="pl"><use href="#i-plus"/></svg><span class="sz">3,831</span><svg class="fo"><use href="#i-folder"/></svg><span class="pa">/Users/mario/Desktop/unitTest</span><svg class="ck"><use href="#i-clock"/></svg><span class="dt">6/1/20, 8:52 PM</span></div>
<div class="row even" style="top:716.7px"><svg class="fi"><use href="#i-music"/></svg><span class="nm" style="letter-spacing:0.0px">Crash_Bandicoot_Warped.mid.zip</span><svg class="pl"><use href="#i-plus"/></svg><span class="sz">3,121</span><svg class="fo"><use href="#i-folder"/></svg><span class="pa">/Users/mario/Desktop/unitTest</span><svg class="ck"><use href="#i-clock"/></svg><span class="dt">6/1/20, 8:52 PM</span></div>
<div class="row odd" style="top:739.5px"><svg class="fi"><use href="#i-app"/></svg><span class="nm">Safari Extractor.app.zip</span><svg class="pl"><use href="#i-plus"/></svg><span class="sz">520,595</span><svg class="fo"><use href="#i-folder"/></svg><span class="pa">/Users/mario/Desktop/unitTest</span><svg class="ck"><use href="#i-clock"/></svg><span class="dt">6/1/20, 8:52 PM</span></div>
<div class="row even" style="top:762.2px"><svg class="fi"><use href="#i-txt"/></svg><span class="nm">plain text data.txt.zip</span><svg class="pl"><use href="#i-plus"/></svg><span class="sz">3,443</span><svg class="fo"><use href="#i-folder"/></svg><span class="pa">/Users/mario/Desktop/unitTes...</span><svg class="ck"><use href="#i-clock"/></svg><span class="dt">6/1/20, 8:52 PM</span></div>
<div class="row odd" style="top:785.0px"><svg class="fi"><use href="#i-globe"/></svg><span class="nm">html bookmarks.html.zip</span><svg class="pl"><use href="#i-plus"/></svg><span class="sz">3,863</span><svg class="fo"><use href="#i-folder"/></svg><span class="pa">/Users/mario/Desktop/unitTest</span><svg class="ck"><use href="#i-clock"/></svg><span class="dt">6/1/20, 8:52 PM</span></div>
<div class="row even" style="top:807.8px"><svg class="fi"><use href="#i-pad"/></svg><span class="nm">Mario and Wario.smc.zip</span><svg class="pl"><use href="#i-plus"/></svg><span class="sz">455,072</span><svg class="fo"><use href="#i-folder"/></svg><span class="pa">/Users/mario/Desktop/unitTest</span><svg class="ck"><use href="#i-clock"/></svg><span class="dt">6/1/20, 8:52 PM</span></div>
<div class="vsep" style="left:617px"></div><div class="vsep" style="left:776px"></div><div class="vsep" style="left:1045px"></div>
<div class="vsb"></div><div class="vth"></div>
<div class="hsb"></div><div class="hth"></div><div class="corner"></div>

<svg class="ti" style="left:216px;top:858.5px;width:19px;height:19px" viewBox="0 0 36 36"><use href="#t-docs"/></svg>
<div class="st" style="left:240px">Total Files :</div>
<div class="st" style="left:322.5px">7392</div>
<svg class="ti" style="left:397.5px;top:860.5px;width:17px;height:17px" viewBox="0 0 17 17"><circle cx="8.5" cy="8.5" r="8.5" fill="#bdbdbf"/><circle cx="7.5" cy="7.3" r="3.3" fill="none" stroke="#2a2a2b" stroke-width="1.5"/><path d="M10 9.8l3 3" stroke="#2a2a2b" stroke-width="1.8" stroke-linecap="round"/></svg>
<div class="st" style="left:421.5px">Total Size :</div>
<div class="st" style="left:503.5px;font-size:13.5px">1,313,113,971 B / 1,282,337.86 KB / 1,252.28 MB / 1.22 GB</div>
<svg class="ti" style="left:1215px;top:860px;width:13px;height:17px" viewBox="0 0 13 17"><path d="M2.8 8V4.6a3.4 3.4 0 0 1 6.8 0V5.5" fill="none" stroke="#b4b4b6" stroke-width="1.6"/><rect x="0.5" y="8" width="12" height="8.5" rx="1.2" fill="#b4b4b6"/></svg>

<div class="menu"><div class="mi" style="top:4px">Extract</div><div class="mi hot" style="top:27.3px">Delete</div></div>
</div></div>
</body></html>
